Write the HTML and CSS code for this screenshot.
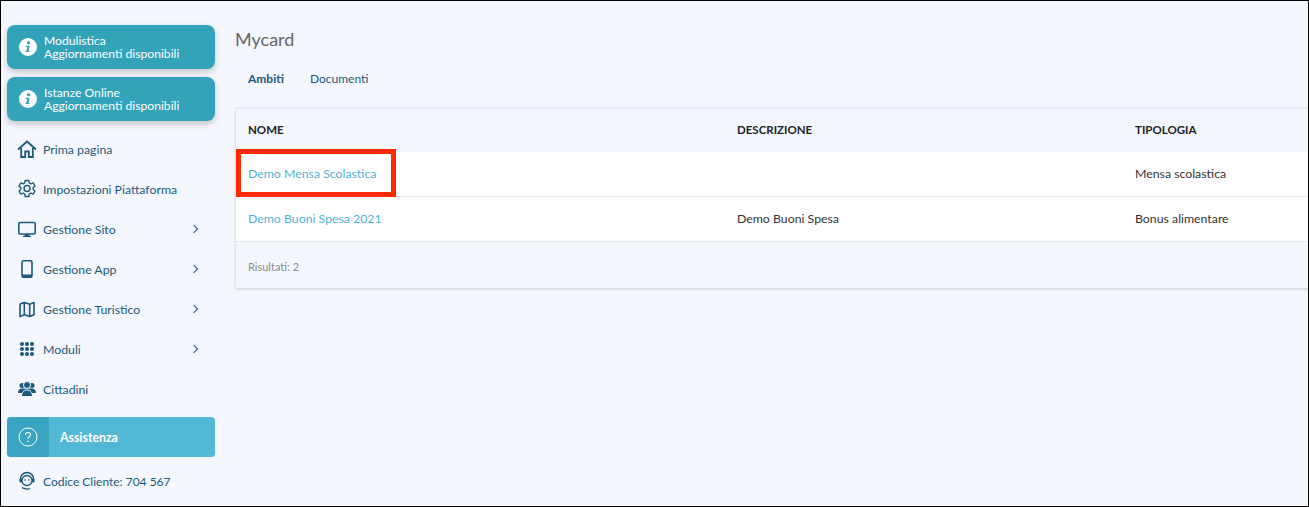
FILE: index.html
```html
<!DOCTYPE html>
<html lang="en">

<head>
    <meta charset="UTF-8">
    <meta name="viewport" content="width=device-width, initial-scale=1.0">
    <link rel="stylesheet" href="styles.css">
    <title>Mycard</title>
</head>

<body>
    <div class="app">
        <!-- Sidebar -->
        <aside class="sidebar">
            <div class="notice">
                <svg class="notice-icon" viewBox="0 0 20 20"><circle cx="10" cy="10" r="10" fill="#fff"/><circle cx="10.6" cy="5.4" r="1.9" fill="#33a3ba"/><path d="M7.6 8.6h4.3l-1.3 5.6h1.2l-.3 1.4H7.1l.3-1.4h1l.9-4.2H7.3z" fill="#33a3ba"/></svg>
                <div>Modulistica<br>Aggiornamenti disponibili</div>
            </div>
            <div class="notice">
                <svg class="notice-icon" viewBox="0 0 20 20"><circle cx="10" cy="10" r="10" fill="#fff"/><circle cx="10.6" cy="5.4" r="1.9" fill="#33a3ba"/><path d="M7.6 8.6h4.3l-1.3 5.6h1.2l-.3 1.4H7.1l.3-1.4h1l.9-4.2H7.3z" fill="#33a3ba"/></svg>
                <div>Istanze Online<br>Aggiornamenti disponibili</div>
            </div>

            <nav class="menu">
                <a class="menu-item">
                    <svg class="menu-icon" viewBox="0 0 20 20"><path d="M1 10.500 10 2.500l9 8" fill="none" stroke="#1b5a7a" stroke-width="1.800"/><path d="M4.200 9v9h4v-5.500h3.600V18h4V9" fill="none" stroke="#1b5a7a" stroke-width="1.800"/></svg>
                    <span>Prima pagina</span>
                </a>
                <a class="menu-item">
                    <svg class="menu-icon" viewBox="0 0 20 20"><path d="M8.200 1.500h3.600l.5 2.500 1.500.8 2.400-.9 1.800 3.100-1.900 1.700v1.600l1.900 1.700-1.800 3.100-2.400-.9-1.500.8-.5 2.500H8.200l-.5-2.500-1.500-.8-2.400.9-1.800-3.100 1.900-1.700V8.700L2 7l1.800-3.100 2.400.9 1.500-.8z" fill="none" stroke="#1b5a7a" stroke-width="1.400" stroke-linejoin="round"/><circle cx="10" cy="9.500" r="3" fill="none" stroke="#1b5a7a" stroke-width="1.400"/></svg>
                    <span>Impostazioni Piattaforma</span>
                </a>
                <a class="menu-item">
                    <svg class="menu-icon" viewBox="0 0 20 20"><rect x="1.800" y="3.500" width="16.400" height="11.500" rx="1.200" fill="none" stroke="#1b5a7a" stroke-width="1.600"/><path d="M8 15h4l.6 2H14v1H6v-1h1.400z" fill="#1b5a7a"/></svg>
                    <span>Gestione Sito</span>
                    <span class="chevron"></span>
                </a>
                <a class="menu-item">
                    <svg class="menu-icon" viewBox="0 0 20 20"><rect x="5" y="1.800" width="10" height="16.400" rx="1.500" fill="none" stroke="#1b5a7a" stroke-width="1.600"/><rect x="5" y="15.500" width="10" height="3" fill="#1b5a7a"/></svg>
                    <span>Gestione App</span>
                    <span class="chevron"></span>
                </a>
                <a class="menu-item">
                    <svg class="menu-icon" viewBox="0 0 20 20"><path d="M3 5 7.300 3.500l5.400 1.700L17 3.500v12.200L12.700 17.500l-5.400-1.800L3 17.500zM7.300 3.500v12.200M12.700 5.200v12.300" fill="none" stroke="#1b5a7a" stroke-width="1.600" stroke-linejoin="round"/></svg>
                    <span>Gestione Turistico</span>
                    <span class="chevron"></span>
                </a>
                <a class="menu-item">
                    <svg class="menu-icon" viewBox="0 0 20 20" fill="#1b5a7a"><circle cx="5" cy="5" r="2"/><circle cx="10" cy="5" r="2"/><circle cx="15" cy="5" r="2"/><circle cx="5" cy="10" r="2"/><circle cx="10" cy="10" r="2"/><circle cx="15" cy="10" r="2"/><circle cx="5" cy="15" r="2"/><circle cx="10" cy="15" r="2"/><circle cx="15" cy="15" r="2"/></svg>
                    <span>Moduli</span>
                    <span class="chevron"></span>
                </a>
                <a class="menu-item">
                    <svg class="menu-icon" viewBox="0 0 20 20" fill="#1b5a7a"><circle cx="5" cy="6.500" r="2.500"/><circle cx="15" cy="6.500" r="2.500"/><path d="M1 14c0-3 1.800-4.500 4-4.500h10c2.200 0 4 1.500 4 4.500z"/><circle cx="10" cy="6" r="3.500" stroke="#f4f7fe" stroke-width="1"/><path d="M4.500 17.500c0-4 2.200-6.500 5.500-6.500s5.500 2.500 5.500 6.500z" stroke="#f4f7fe" stroke-width="1"/></svg>
                    <span>Cittadini</span>
                </a>
            </nav>

            <div class="help">
                <div class="help-icon">
                    <svg viewBox="0 0 20 20" width="20" height="20"><circle cx="10" cy="10" r="9" fill="none" stroke="#fff" stroke-width="1"/><path d="M7.500 8c0-1.500 1.100-2.500 2.500-2.500s2.500 1 2.500 2.300c0 2-2.500 2-2.500 4" fill="none" stroke="#fff" stroke-width="1.100"/><circle cx="10" cy="14.300" r=".8" fill="#fff"/></svg>
                </div>
                <span>Assistenza</span>
            </div>

            <div class="client-code">
                <svg class="menu-icon" viewBox="0 0 20 20"><circle cx="10" cy="9.500" r="5" fill="none" stroke="#1b5a7a" stroke-width="1.300"/><path d="M3.500 10V8a6.500 6.500 0 0 1 13 0v2" fill="none" stroke="#1b5a7a" stroke-width="1.500"/><rect x="2.500" y="7.500" width="2.500" height="4" rx="1" fill="#1b5a7a"/><rect x="15" y="7.500" width="2.500" height="4" rx="1" fill="#1b5a7a"/><path d="M5 16.500c2 1.500 6 2 8 1" fill="none" stroke="#1b5a7a" stroke-width="1.300"/><circle cx="8" cy="9" r=".8" fill="#1b5a7a"/><circle cx="12" cy="9" r=".8" fill="#1b5a7a"/></svg>
                <span>Codice Cliente: 704 567</span>
            </div>
        </aside>

        <!-- Main content -->
        <main class="content">
            <h1>Mycard</h1>
            <div class="tabs">
                <a class="tab active">Ambiti</a>
                <a class="tab">Documenti</a>
            </div>

            <div class="panel">
                <table>
                    <thead>
                        <tr>
                            <th class="col-name">Nome</th>
                            <th class="col-desc">Descrizione</th>
                            <th class="col-type">Tipologia</th>
                        </tr>
                    </thead>
                    <tbody>
                        <tr>
                            <td><a>Demo Mensa Scolastica</a></td>
                            <td></td>
                            <td>Mensa scolastica</td>
                        </tr>
                        <tr>
                            <td><a>Demo Buoni Spesa 2021</a></td>
                            <td>Demo Buoni Spesa</td>
                            <td>Bonus alimentare</td>
                        </tr>
                    </tbody>
                </table>
                <div class="panel-footer">Risultati: 2</div>
                <!-- annotation drawn over the first row -->
                <div class="highlight"></div>
            </div>
        </main>
    </div>
</body>

</html>
```

FILE: styles.css
```css
html, body {
    margin: 0;
    padding: 0;
    height: 100%;
}

body {
    font-family: 'Lato', 'Noto Sans', sans-serif;
    font-size: 12.3px;
    background-color: #f4f7fe;
    overflow: hidden;
}

.app {
    display: flex;
    height: 100vh;
    box-sizing: border-box;
    border: 1px solid #000;
    overflow: hidden;
}

.sidebar {
    width: 214px;
    flex-shrink: 0;
    padding: 24px 0 0 6px;
    box-sizing: border-box;
}

.notice {
    display: flex;
    align-items: center;
    gap: 7px;
    width: 208px;
    height: 44px;
    box-sizing: border-box;
    padding-left: 12px;
    margin-bottom: 8px;
    background-color: #33a3ba;
    border-radius: 8px;
    box-shadow: 0 3px 6px rgba(0, 0, 0, 0.2);
    color: #fff;
    font-size: 12.15px;
    line-height: 13px;
}

.notice-icon {
    width: 18px;
    height: 18px;
    flex-shrink: 0;
}

.menu {
    margin-top: 8px;
}

.menu-item {
    display: flex;
    align-items: center;
    gap: 6px;
    height: 40px;
    width: 193px;
    padding-left: 10px;
    box-sizing: border-box;
    color: #1b5a7a;
}

.menu-icon {
    width: 20px;
    height: 20px;
    flex-shrink: 0;
}

.chevron {
    width: 5px;
    height: 5px;
    margin-left: auto;
    margin-right: 3px;
    border-top: 1.4px solid #1b5a7a;
    border-right: 1.4px solid #1b5a7a;
    transform: rotate(45deg);
}

.help {
    display: flex;
    align-items: center;
    width: 208px;
    height: 40px;
    margin-top: 8px;
    background-color: #53b7d6;
    border-radius: 4px;
    overflow: hidden;
    color: #fff;
    font-weight: 700;
}

.help-icon {
    display: flex;
    align-items: center;
    justify-content: center;
    width: 42px;
    height: 100%;
    margin-right: 11px;
    background-color: #3ba4c2;
}

.client-code {
    display: flex;
    align-items: center;
    gap: 6px;
    height: 20px;
    margin-top: 14px;
    padding-left: 10px;
    font-size: 12px;
    color: #1b5a7a;
}

.content {
    flex: 1;
    min-width: 0;
    padding: 0 0 0 20px;
    overflow: hidden;
}

h1 {
    margin: 27px 0 0;
    font-size: 18px;
    line-height: 22px;
    font-weight: 400;
    color: #666;
}

.tabs {
    display: flex;
    gap: 26px;
    margin-top: 20px;
    padding-left: 13px;
    line-height: 18px;
    font-size: 12px;
    color: #1b5a7a;
}

.tab.active {
    font-weight: 700;
}

.panel {
    position: relative;
    width: 1200px;
    margin-top: 20px;
    margin-left: 1px;
    background-color: #f4f7fe;
    border-top: 1px solid #e4e6ea;
    box-shadow: 0 1px 3px rgba(0, 0, 0, 0.2);
}

table {
    width: 100%;
    border-collapse: collapse;
    table-layout: fixed;
}

th, td {
    padding: 0 12px 2px;
    text-align: left;
}

th {
    height: 41px;
    text-transform: uppercase;
    font-size: 11.5px;
    font-weight: 700;
    color: #222;
}

.col-name {
    width: 465px;
}

.col-desc {
    width: 374px;
}

td {
    height: 42px;
    background-color: #fff;
    border-bottom: 1px solid #e4e6ea;
    color: #333;
}

td a {
    color: #4fb3d3;
}

.panel-footer {
    height: 46px;
    line-height: 49px;
    padding-left: 12px;
    font-size: 11px;
    color: #8a8a8a;
}

.highlight {
    position: absolute;
    top: 40px;
    left: 0;
    width: 160px;
    height: 48px;
    box-sizing: border-box;
    border: 5px solid #ff2a00;
}
```
